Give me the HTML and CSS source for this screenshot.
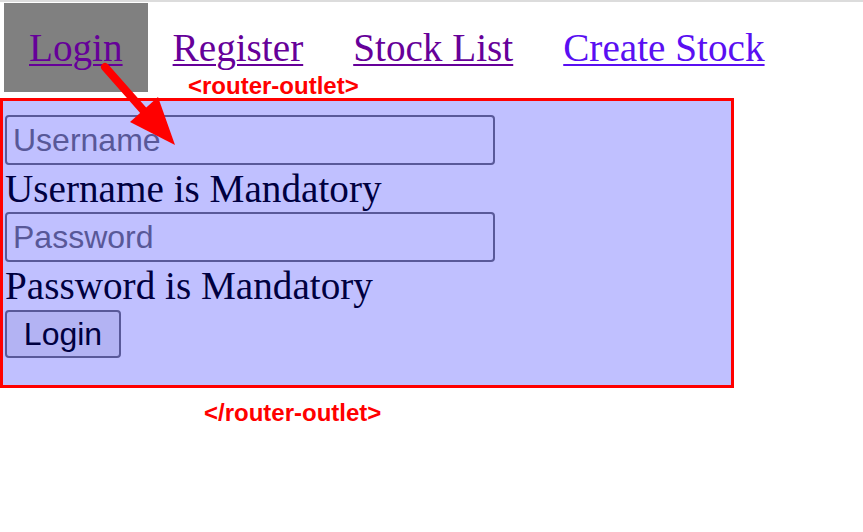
FILE: index.html
```html
<!DOCTYPE html>
<html>
<head>
<meta charset="utf-8">
<link rel="stylesheet" href="styles.css">
</head>
<body>
<div class="page">
  <nav class="nav">
    <a class="nav-link active visited" href="#">Login</a>
    <a class="nav-link visited" href="#">Register</a>
    <a class="nav-link visited" href="#">Stock List</a>
    <a class="nav-link fresh" href="#">Create Stock</a>
  </nav>
  <div class="outlet">
    <input class="field" type="text" placeholder="Username">
    <div class="error">Username is Mandatory</div>
    <input class="field" type="password" placeholder="Password">
    <div class="error">Password is Mandatory</div>
    <button class="btn" type="button">Login</button>
  </div>
  <div class="label label-open">&lt;router-outlet&gt;</div>
  <div class="label label-close">&lt;/router-outlet&gt;</div>
  <svg class="arrow" width="863" height="532" viewBox="0 0 863 532">
    <line x1="105" y1="67" x2="150" y2="118" stroke="#ff0000" stroke-width="8" stroke-linecap="round"/>
    <polygon points="175,145 130,122 158,97" fill="#ff0000"/>
  </svg>
</div>
</body>
</html>
```

FILE: styles.css
```css
html, body {
  margin: 0;
  padding: 0;
  background: #ffffff;
}

.page {
  position: relative;
  width: 863px;
  height: 532px;
  border-top: 2px solid #dcdcdc;
  box-sizing: border-box;
}

.nav {
  display: flex;
  padding: 1px 0 0 4px;
  height: 90px;
  box-sizing: border-box;
}

.nav-link {
  display: block;
  height: 89px;
  line-height: 89px;
  padding: 0 25px;
  font-family: "Liberation Serif", serif;
  font-size: 39.2px;
  text-decoration: underline;
  text-decoration-thickness: 2px;
  text-underline-offset: 3px;
}

.nav-link.visited { color: #660099; }
.nav-link.fresh { color: #5a0ff2; }
.nav-link.active { background: #808080; }

.outlet {
  margin-top: 6px;
  width: 734px;
  box-sizing: border-box;
  border: 3px solid #ff0000;
  background: #c0c0ff;
  padding: 14px 0 27px 2px;
}

.field {
  display: block;
  box-sizing: border-box;
  width: 490px;
  height: 50px;
  margin: 0;
  padding: 0 6px;
  border: 2px solid #595999;
  border-radius: 4px;
  background: transparent;
  font-family: "Liberation Sans", Arial, sans-serif;
  font-size: 32px;
  color: #000040;
  outline: none;
}

.field::placeholder {
  color: #585898;
  opacity: 1;
}

.error {
  font-family: "Liberation Serif", serif;
  font-size: 39.2px;
  line-height: 47px;
  color: #000040;
  height: 47px;
}

.btn {
  display: block;
  box-sizing: border-box;
  width: 116px;
  height: 48px;
  margin: 1px 0 0 0;
  padding: 0;
  border: 2px solid #595999;
  border-radius: 4px;
  background: #b3b3f3;
  color: #000040;
  font-family: "Liberation Sans", Arial, sans-serif;
  font-size: 32px;
}

.label {
  position: absolute;
  font-family: "Liberation Sans", Arial, sans-serif;
  font-weight: bold;
  font-size: 24px;
  color: #ff0000;
  white-space: nowrap;
}

.label-open { left: 188px; top: 70px; }
.label-close { left: 204px; top: 397px; }

.arrow {
  position: absolute;
  left: 0;
  top: -2px;
  pointer-events: none;
}
```
